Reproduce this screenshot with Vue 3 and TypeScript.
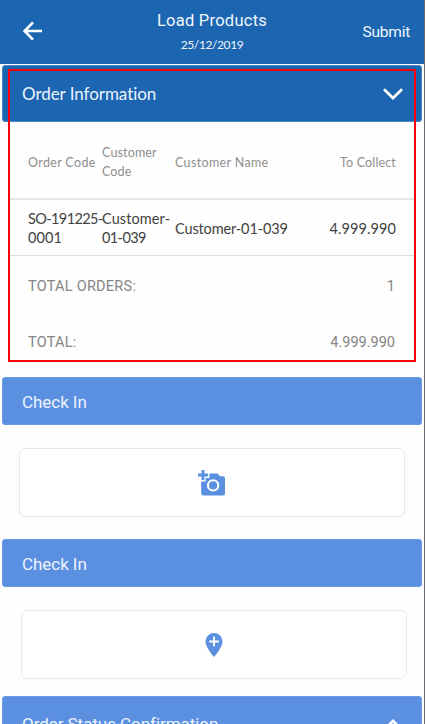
<script setup lang="ts">
interface Order {
  code: string[]
  customerCode: string[]
  customerName: string
  toCollect: string
}

const orders: Order[] = [
  {
    code: ['SO-191225-', '0001'],
    customerCode: ['Customer-', '01-039'],
    customerName: 'Customer-01-039',
    toCollect: '4.999.990',
  },
]
</script>

<template>
  <div class="screen">
    <header class="topbar">
      <svg class="back" viewBox="0 0 20 20" width="20" height="20">
        <path d="M19 10H2M10 1.4 1.6 10 10 18.6" />
      </svg>
      <div class="heading">
        <h1>Load Products</h1>
        <p>25/12/2019</p>
      </div>
      <button class="submit">Submit</button>
    </header>

    <main>
      <section class="info">
        <div class="bar dark">
          <span class="bar-title info-title">Order Information</span>
          <svg class="chevron" viewBox="0 0 20 12" width="20" height="12">
            <path d="M1 1.2 10 10 19 1.2" />
          </svg>
        </div>
        <div class="grid head">
          <span class="wide">Order Code</span>
          <span>Customer<br />Code</span>
          <span class="wide">Customer Name</span>
          <span class="right">To Collect</span>
        </div>
        <div v-for="o in orders" :key="o.customerName" class="grid row">
          <span><span class="tight">{{ o.code[0] }}</span><br />{{ o.code[1] }}</span>
          <span>{{ o.customerCode[0] }}<br /><span class="tight">{{ o.customerCode[1] }}</span></span>
          <span class="name">{{ o.customerName }}</span>
          <span class="right amount">{{ o.toCollect }}</span>
        </div>
        <div class="total first">
          <span class="label">TOTAL ORDERS:</span><span>{{ orders.length }}</span>
        </div>
        <div class="total">
          <span class="label">TOTAL:</span><span>4.999.990</span>
        </div>
        <div class="highlight"></div>
      </section>

      <section class="check">
        <div class="bar"><span class="bar-title">Check In</span></div>
        <button class="card">
          <svg class="camera" viewBox="0 0 28 26" width="28" height="26">
            <path
              fill-rule="evenodd"
              d="M3.500 0h2.900v3.600H10v2.900H6.400v3.600H3.500V6.500H0V3.600h3.500zM11.400 3.600h8.200l2.500 2.700H25q2 0 2 2v15.200q0 2-2 2H5.200q-2 0-2-2V11.600h4.400V7.900h3.800zM15.100 9.200a6.200 6.200 0 1 0 0 12.400 6.200 6.200 0 0 0 0-12.400zM15.100 11.300a4.100 4.100 0 1 1 0 8.200 4.100 4.100 0 0 1 0-8.200z"
            />
          </svg>
        </button>
      </section>

      <section class="check second">
        <div class="bar"><span class="bar-title">Check In</span></div>
        <button class="card">
          <svg class="pin" viewBox="0 0 18 24" width="18" height="24">
            <path
              fill-rule="evenodd"
              d="M9 0a8.500 8.500 0 0 0-8.500 8.500C.5 14.500 9 24 9 24s8.500-9.500 8.500-15.500A8.500 8.500 0 0 0 9 0zM8.100 3.600h1.900v3.900h3.900v1.900H10v3.900H8.100V9.400H4.200V7.500h3.900z"
            />
          </svg>
        </button>
      </section>

      <section class="status">
        <div class="bar tall">
          <span class="bar-title">Order Status Confirmation</span>
          <svg class="chevron" viewBox="0 0 20 12" width="20" height="12">
            <path d="M1 10.8 10 2 19 10.8" />
          </svg>
        </div>
      </section>
    </main>
  </div>
</template>

<style>
body {
  margin: 0;
  overflow: hidden;
}
</style>

<style scoped>
.screen {
  box-sizing: border-box;
  width: 425px;
  height: 724px;
  overflow: hidden;
  background: #fefefe;
  border-right: 1px solid #6b6b6f;
  font-family: Roboto, sans-serif;
}
.topbar {
  box-sizing: border-box;
  display: grid;
  grid-template-columns: 90px 1fr 90px;
  height: 64px;
  background: #1c66b1;
  color: #f1f6fb;
}
.back {
  margin: 21px 0 0 23px;
  fill: none;
  stroke: #fff;
  stroke-width: 2.6;
}
.heading {
  text-align: center;
}
h1 {
  margin: 11px 0 0;
  font-size: 16.5px;
  line-height: 20px;
  font-weight: 400;
  letter-spacing: 0.25px;
}
p {
  margin: 6px 0 0;
  font: 12px/16px Lato, sans-serif;
  letter-spacing: -0.4px;
}
.submit,
.card {
  padding: 0;
  border: 0;
  background: none;
  font: inherit;
  color: inherit;
}
.submit {
  height: 64px;
  padding: 0 14px 0 0;
  text-align: right;
  font-size: 15.5px;
  letter-spacing: -0.25px;
}
main {
  padding: 1px 2px 0;
}
.bar {
  box-sizing: border-box;
  display: flex;
  align-items: center;
  justify-content: space-between;
  height: 48px;
  padding: 1px 18px 0 19px;
  border: 1px solid #6a9ae5;
  border-radius: 3px;
  background: #5b90e1;
  color: #edf3fc;
}
.bar.dark {
  height: 57px;
  padding-top: 0;
  border-color: #4a86c5;
  background: #1c66b1;
}
.bar.tall {
  height: 57px;
  padding-top: 0;
}
.bar-title {
  font-size: 17px;
  letter-spacing: -0.05px;
}
.tall .bar-title {
  margin-bottom: 2px;
}
.info-title {
  font-family: Lato, sans-serif;
}
.chevron {
  fill: none;
  stroke: #fff;
  stroke-width: 2.7;
}
.info {
  position: relative;
  height: 312px;
}
.highlight {
  position: absolute;
  inset: 4px 6px 15px;
  border: 2px solid #fb0007;
}
.grid {
  box-sizing: border-box;
  display: grid;
  grid-template-columns: 74px 73px 1fr 84px;
  align-items: center;
  margin: 0 8px;
  padding: 0 18px;
  white-space: nowrap;
  font-family: Lato, sans-serif;
}
.head {
  height: 78px;
  padding-top: 4px;
  border-bottom: 2px solid #e6e6e6;
  color: #8e8e8e;
  font-size: 12.5px;
  line-height: 19px;
  letter-spacing: 0.15px;
}
.wide {
  letter-spacing: 0.35px;
}
.row {
  height: 56px;
  padding-top: 1px;
  border-bottom: 1px solid #dedede;
  color: #424242;
  font-size: 14.5px;
  line-height: 19px;
  letter-spacing: 0.1px;
}
.tight {
  letter-spacing: -0.6px;
}
.name {
  letter-spacing: -0.13px;
}
.right {
  text-align: right;
}
.total {
  display: flex;
  align-items: center;
  justify-content: space-between;
  height: 56px;
  padding: 0 27px 0 26px;
  color: #858585;
  font-size: 14.5px;
}
.label {
  letter-spacing: 0.25px;
}
.total.first {
  height: 58px;
  padding-top: 1px;
  margin-bottom: -1px;
}
.check {
  height: 162px;
}
.card {
  box-sizing: border-box;
  display: flex;
  align-items: center;
  justify-content: center;
  width: 386px;
  height: 69px;
  margin: 23px 0 0 17px;
  border: 1px solid #e9e9e9;
  border-radius: 6px;
  background: #fff;
}
.second {
  height: 157px;
}
.second .card {
  margin-left: 19px;
}
.camera,
.pin {
  fill: #5b90e1;
}
</style>
